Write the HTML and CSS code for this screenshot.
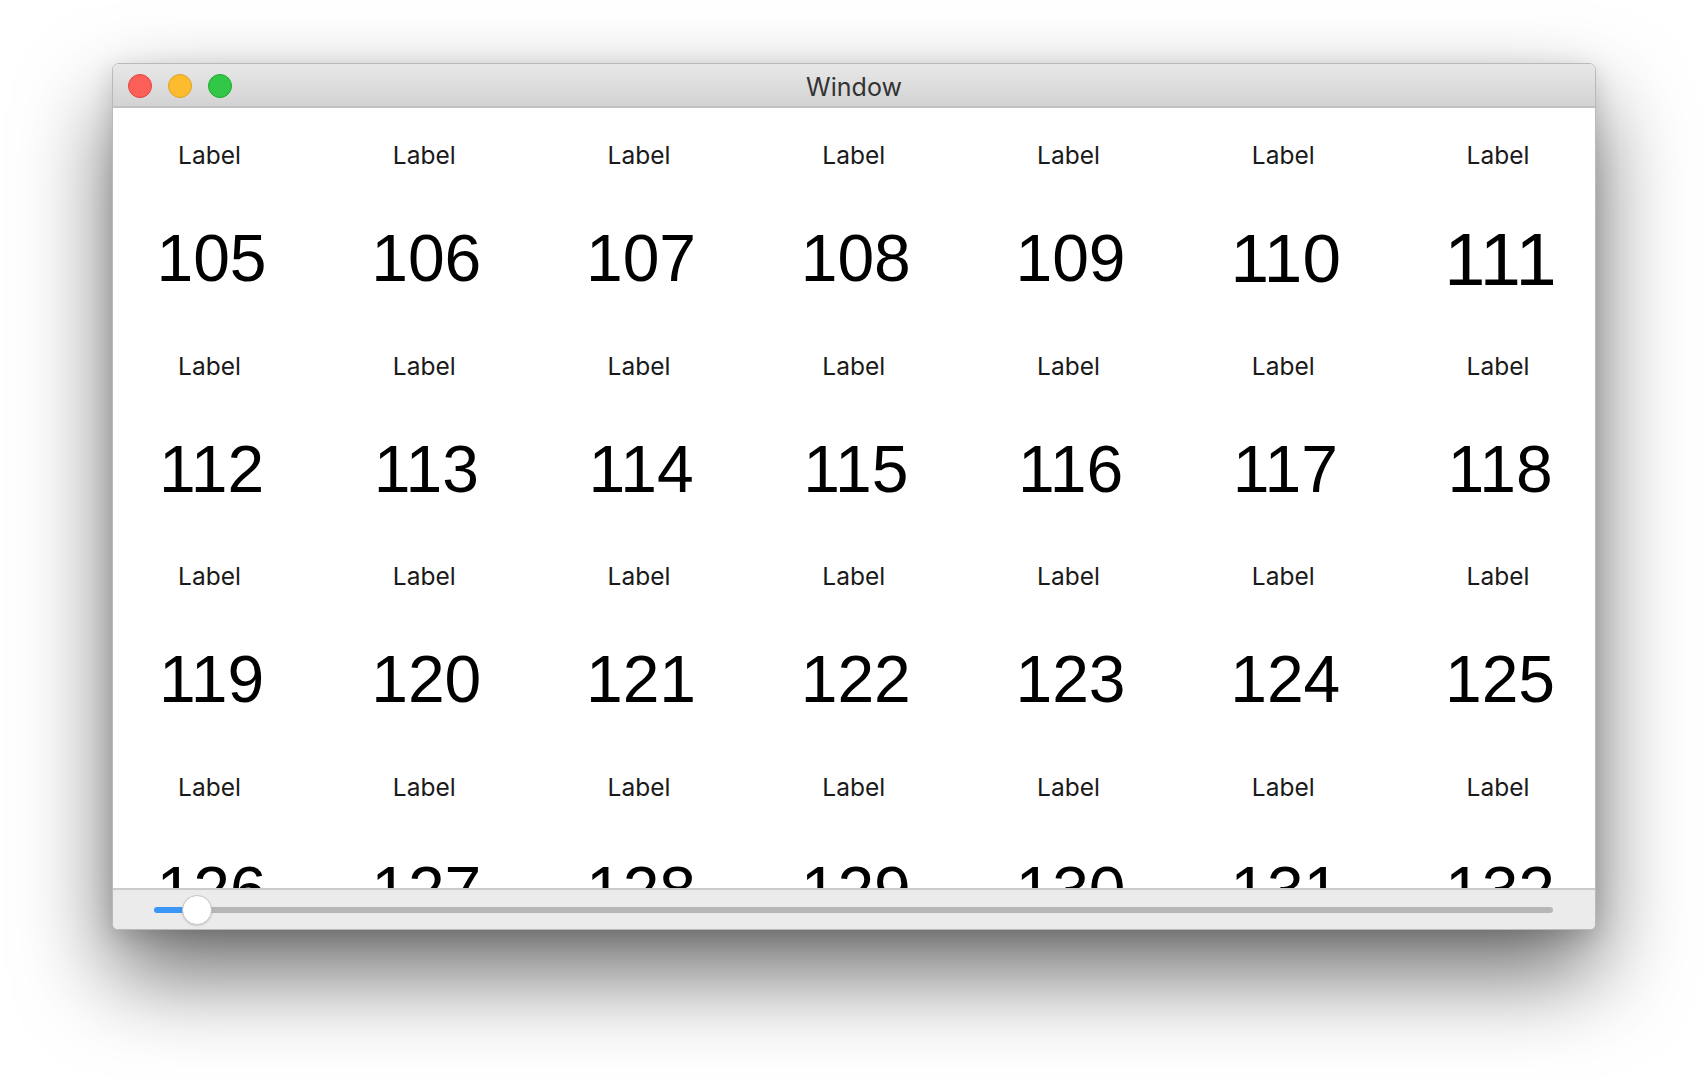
FILE: index.html
```html
<!DOCTYPE html>
<html>
<head>
<meta charset="utf-8">
<link rel="stylesheet" href="styles.css">
</head>
<body>
<div class="window">
  <div class="titlebar">
    <div class="lights">
      <span class="light red"></span>
      <span class="light yellow"></span>
      <span class="light green"></span>
    </div>
    <div class="title">Window</div>
  </div>
  <div class="content">
    <div class="grid">
      <div class="cell"><div class="label">Label</div><div class="num">105</div></div>
      <div class="cell"><div class="label">Label</div><div class="num">106</div></div>
      <div class="cell"><div class="label">Label</div><div class="num">107</div></div>
      <div class="cell"><div class="label">Label</div><div class="num">108</div></div>
      <div class="cell"><div class="label">Label</div><div class="num">109</div></div>
      <div class="cell"><div class="label">Label</div><div class="num z1">110</div></div>
      <div class="cell"><div class="label">Label</div><div class="num z2">111</div></div>
      <div class="cell"><div class="label">Label</div><div class="num">112</div></div>
      <div class="cell"><div class="label">Label</div><div class="num">113</div></div>
      <div class="cell"><div class="label">Label</div><div class="num">114</div></div>
      <div class="cell"><div class="label">Label</div><div class="num">115</div></div>
      <div class="cell"><div class="label">Label</div><div class="num">116</div></div>
      <div class="cell"><div class="label">Label</div><div class="num">117</div></div>
      <div class="cell"><div class="label">Label</div><div class="num">118</div></div>
      <div class="cell"><div class="label">Label</div><div class="num">119</div></div>
      <div class="cell"><div class="label">Label</div><div class="num">120</div></div>
      <div class="cell"><div class="label">Label</div><div class="num">121</div></div>
      <div class="cell"><div class="label">Label</div><div class="num">122</div></div>
      <div class="cell"><div class="label">Label</div><div class="num">123</div></div>
      <div class="cell"><div class="label">Label</div><div class="num">124</div></div>
      <div class="cell"><div class="label">Label</div><div class="num">125</div></div>
      <div class="cell"><div class="label">Label</div><div class="num">126</div></div>
      <div class="cell"><div class="label">Label</div><div class="num">127</div></div>
      <div class="cell"><div class="label">Label</div><div class="num">128</div></div>
      <div class="cell"><div class="label">Label</div><div class="num">129</div></div>
      <div class="cell"><div class="label">Label</div><div class="num">130</div></div>
      <div class="cell"><div class="label">Label</div><div class="num">131</div></div>
      <div class="cell"><div class="label">Label</div><div class="num">132</div></div>
    </div>
  </div>
  <div class="bottombar">
    <div class="slider">
      <div class="fill"></div>
      <div class="knob"></div>
      <div class="rest"></div>
    </div>
  </div>
</div>
</body>
</html>
```
FILE: styles.css
```css
html {
  overflow: hidden;
  background: #ffffff;
}

body {
  margin: 0;
  padding: 0;
  min-height: 1090px;
  background: #ffffff;
}

.window {
  margin: 63px 0 0 112px;
  width: 1484px;
  height: 867px;
  box-sizing: border-box;
  border: 1px solid #b9b9b9;
  border-radius: 7px 7px 6px 6px;
  overflow: hidden;
  display: flex;
  flex-direction: column;
  background: #ffffff;
  box-shadow: 0 44px 90px rgba(0, 0, 0, 0.58), 0 6px 24px rgba(0, 0, 0, 0.14);
}

.titlebar {
  height: 44px;
  flex: none;
  box-sizing: border-box;
  border-bottom: 2px solid #c2c0c2;
  background: linear-gradient(#e9e8e9, #d4d3d4);
  display: flex;
  align-items: center;
  position: relative;
}

.lights {
  display: flex;
  gap: 16px;
  padding-left: 15px;
  padding-top: 1px;
}

.light {
  width: 24px;
  height: 24px;
  box-sizing: border-box;
  border-radius: 50%;
  display: block;
}
.red { background: #fc5f57; border: 1px solid #e0443e; }
.yellow { background: #fdbc2e; border: 1px solid #dea123; }
.green { background: #33c748; border: 1px solid #1aab29; }

.title {
  position: absolute;
  left: 0;
  right: 0;
  top: 0;
  bottom: 0;
  display: flex;
  align-items: center;
  justify-content: center;
  font-family: Inter, "Liberation Sans", sans-serif;
  font-size: 25px;
  color: #333333;
  padding-top: 3px;
}

.content {
  flex: 1;
  overflow: hidden;
  background: #ffffff;
}

.grid {
  display: grid;
  grid-template-columns: repeat(7, 193px);
  column-gap: 21.75px;
  grid-auto-rows: 210.5px;
}

.cell {
  display: flex;
  flex-direction: column;
  align-items: center;
  padding-top: 32px;
}

.label {
  font-family: Inter, "Liberation Sans", sans-serif;
  font-size: 24.5px;
  line-height: 30px;
  color: #1a1a1a;
}

.num {
  margin-top: 48px;
  padding-left: 4px;
  font-family: "Liberation Sans", Arial, sans-serif;
  font-size: 66px;
  line-height: 80px;
  color: #000000;
}

.num.z1 { transform: scale(1.05); }
.num.z2 { transform: scale(1.12) translateY(1px); }

.bottombar {
  height: 41px;
  flex: none;
  box-sizing: border-box;
  border-top: 2px solid #cbcbcb;
  background: #ebebeb;
  display: flex;
  align-items: center;
  padding: 0 42px 0 41px;
}

.slider {
  flex: 1;
  display: flex;
  align-items: center;
  height: 30px;
}

.fill {
  width: 30px;
  height: 6px;
  background: #3b97f7;
  border-radius: 3px 0 0 3px;
  margin-right: -2px;
}

.rest {
  flex: 1;
  height: 6px;
  background: #b6b6b6;
  border-radius: 0 3px 3px 0;
  margin-left: -2px;
}

.knob {
  width: 30px;
  height: 30px;
  box-sizing: border-box;
  border-radius: 50%;
  background: #ffffff;
  border: 1px solid #c6c6c6;
  box-shadow: 0 1px 2px rgba(0, 0, 0, 0.15);
  position: relative;
  z-index: 1;
}
```
